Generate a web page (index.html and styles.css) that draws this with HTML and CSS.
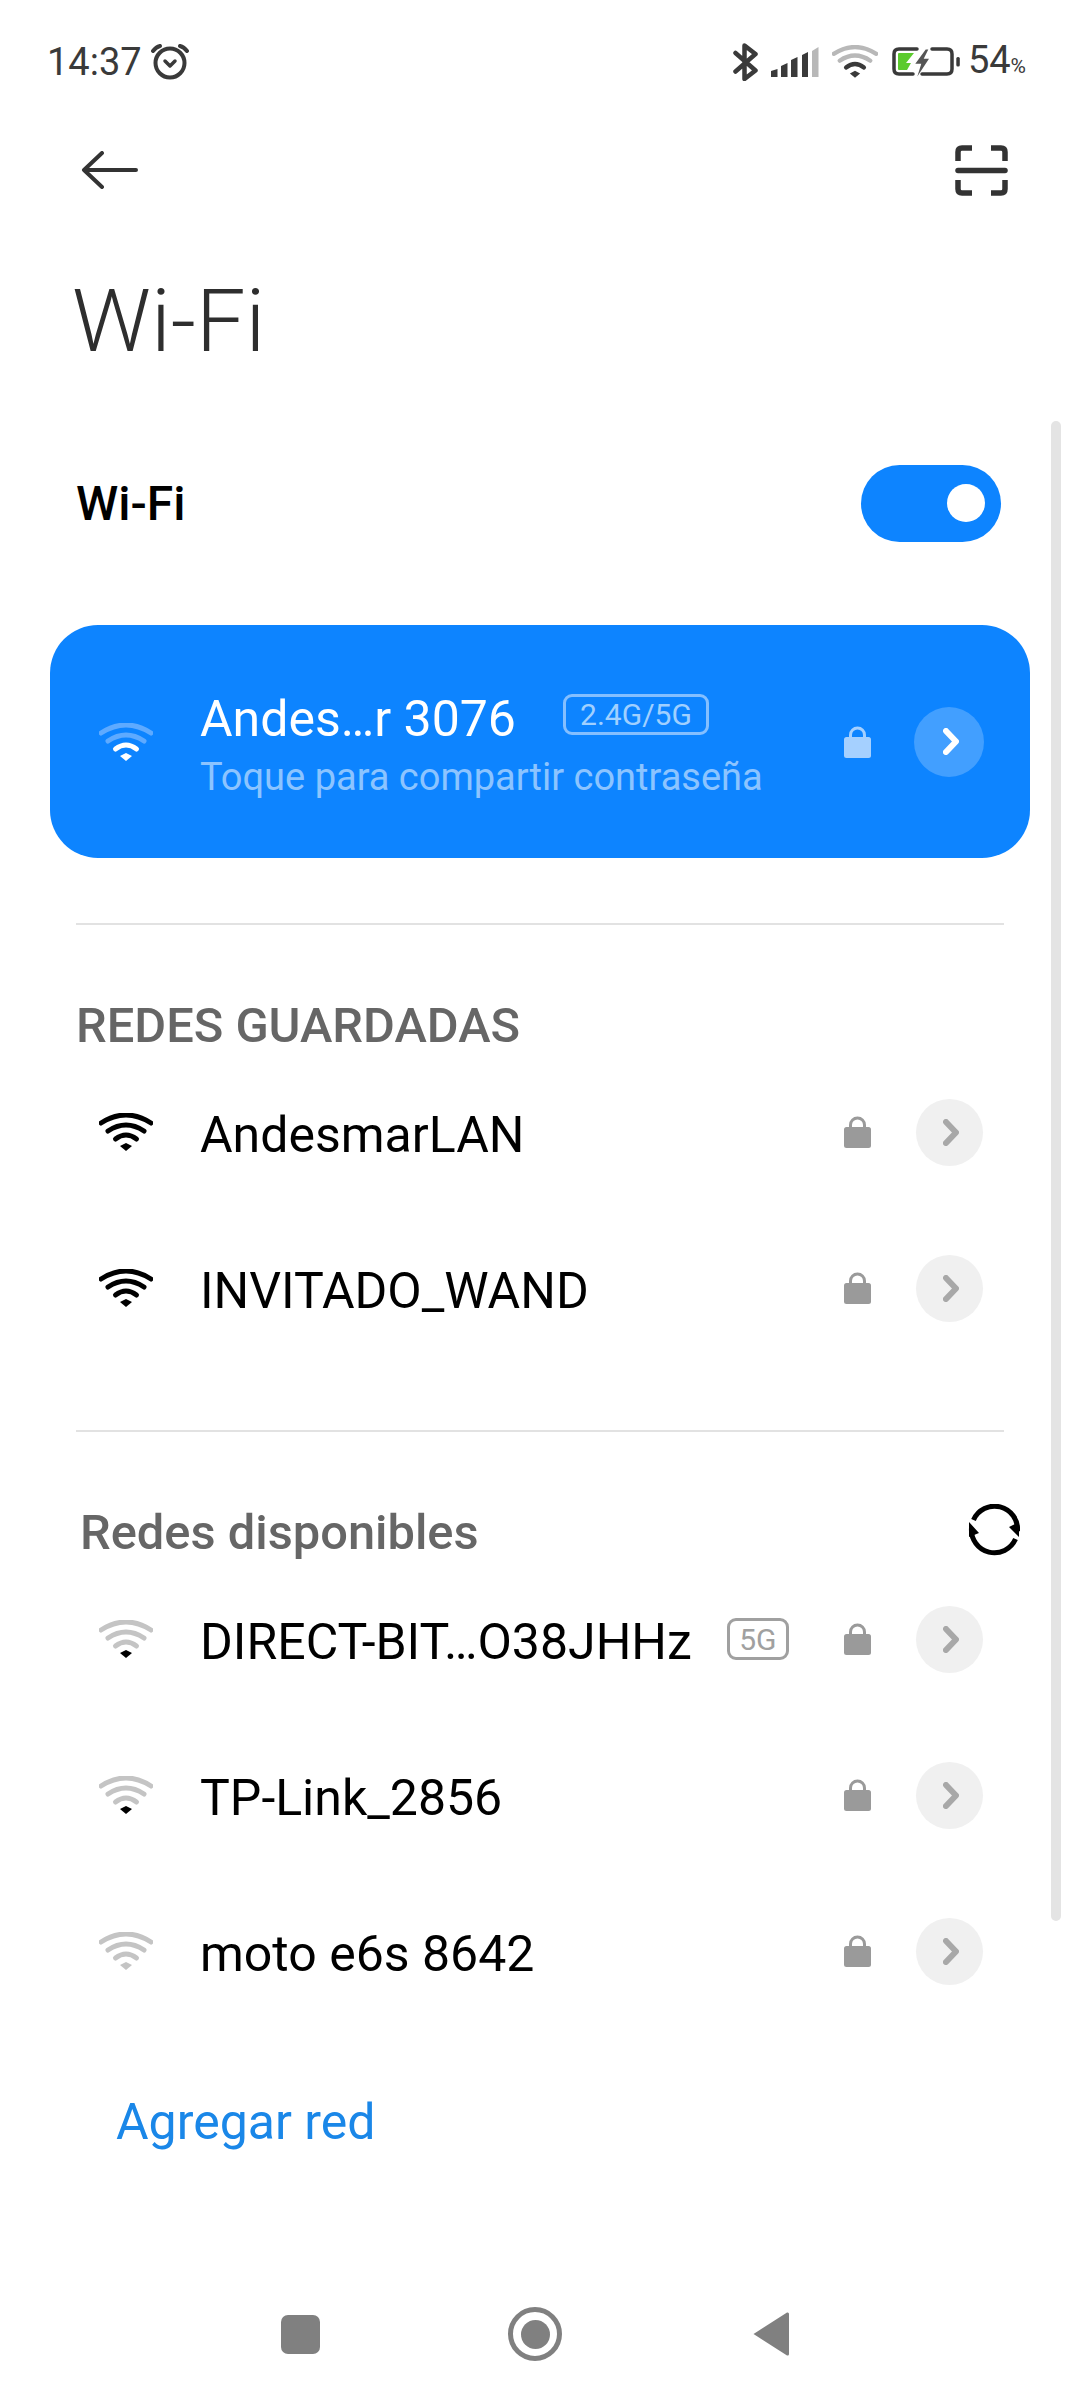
FILE: index.html
```html
<!DOCTYPE html>
<html lang="es">
<head>
<meta charset="utf-8">
<title>Wi-Fi</title>
<link rel="stylesheet" href="styles.css">
</head>
<body>
<div class="page">
  <div class="status">
    <div class="status-left">
      <span class="clock">14:37</span>
      <svg class="i-alarm" viewBox="0 0 40 36"><circle cx="20" cy="19" r="14.5"/><path d="M3 7 Q6 3 10 2 M37 7 Q34 3 30 2"/><path class="thin" d="M15 17 L20 22 L25 17"/></svg>
    </div>
    <div class="status-right">
      <svg class="i-bt" viewBox="0 0 25 38"><path d="M2.5 10 L22.5 27.5 L11.5 36 V2.5 L22.5 11 L2.5 28.5"/></svg>
      <svg class="i-signal" viewBox="0 0 48 30"><path d="M0 24 L6.500 22 V30 H0Z M10 19 L16.500 16 V30 H10Z M20 13 L26.500 10 V30 H20Z M31 8 L37 5 V30 H31Z"/><path class="dim" d="M41 4 L47.500 0 V30 H41Z"/></svg>
      <svg class="wifi i-swifi wifi-status" viewBox="0 0 54 38"><path class="a1" d="M2 10 Q27 -6 52 10"/><path class="a2" d="M9 18 Q27 6 45 18"/><path class="a3" d="M16.500 26 Q27 18 37.500 26"/><path class="d" d="M21 33 L27 30 L33 33 L27 38Z"/></svg>
      <svg class="i-batt" viewBox="0 0 70 32"><path class="line" d="M26 3 H8 Q3 3 3 8 V23 Q3 28 8 28 H22 M41 3 H56 Q61 3 61 8 V23 Q61 28 56 28 H31"/><path class="green" d="M8 7 H23 L15 17 H20 L16 24 H8 Q7 24 7 23 V8 Q7 7 8 7Z"/><path class="bolt" d="M34.700 3.500 L24.300 17.700 H30.300 L26.300 30.500 L38 12.700 H32.700 L37.300 3.500Z"/><rect class="cap" x="65.300" y="11" width="3.500" height="9.500" rx="1.500"/></svg>
      <span class="batt-num">54<small>%</small></span>
    </div>
  </div>

  <div class="toolbar">
    <svg class="i-back" viewBox="0 0 57 38"><path d="M55 19 H3 M21 2 L3 19 L21 36"/></svg>
    <svg class="i-scan" viewBox="0 0 53 51"><path d="M17 3 H7 Q3 3 3 7 V16 M36 3 H46 Q50 3 50 7 V16 M17 48 H7 Q3 48 3 44 V35 M36 48 H46 Q50 48 50 44 V35"/><path class="bar" d="M3 25.500 H50"/></svg>
  </div>

  <h1 class="title">Wi-Fi</h1>

  <div class="toggle-row">
    <span class="toggle-label">Wi-Fi</span>
    <div class="toggle"><span class="knob"></span></div>
  </div>

  <div class="card">
    <svg class="wifi wifi-card" viewBox="0 0 54 38"><path class="a1" d="M2 10 Q27 -6 52 10"/><path class="a2" d="M9 18 Q27 6 45 18"/><path class="a3" d="M16.500 26 Q27 18 37.500 26"/><path class="d" d="M21 33 L27 30 L33 33 L27 38Z"/></svg>
    <div class="card-text">
      <div class="card-top"><span class="card-name">Andes…r 3076</span><span class="tag tag-card">2.4G/5G</span></div>
      <div class="card-sub">Toque para compartir contraseña</div>
    </div>
    <svg class="lock lock-card" viewBox="0 0 27 32"><path class="shackle" d="M6.500 13 V9 a7 7 0 0 1 14 0 V13"/><rect y="11" width="27" height="21" rx="2.500"/></svg>
    <div class="go go-card"><svg viewBox="0 0 16 27"><path d="M3 3 L13 13.500 L3 24"/></svg></div>
  </div>

  <hr class="rule rule-first">

  <h2 class="heading heading-saved">REDES GUARDADAS</h2>

  <div class="net">
    <svg class="wifi wifi-full" viewBox="0 0 54 38"><path class="a1" d="M2 10 Q27 -6 52 10"/><path class="a2" d="M9 18 Q27 6 45 18"/><path class="a3" d="M16.500 26 Q27 18 37.500 26"/><path class="d" d="M21 33 L27 30 L33 33 L27 38Z"/></svg>
    <span class="net-name">AndesmarLAN</span>
    <svg class="lock" viewBox="0 0 27 32"><path class="shackle" d="M6.500 13 V9 a7 7 0 0 1 14 0 V13"/><rect y="11" width="27" height="21" rx="2.500"/></svg>
    <div class="go"><svg viewBox="0 0 16 27"><path d="M3 3 L13 13.500 L3 24"/></svg></div>
  </div>
  <div class="net">
    <svg class="wifi wifi-full" viewBox="0 0 54 38"><path class="a1" d="M2 10 Q27 -6 52 10"/><path class="a2" d="M9 18 Q27 6 45 18"/><path class="a3" d="M16.500 26 Q27 18 37.500 26"/><path class="d" d="M21 33 L27 30 L33 33 L27 38Z"/></svg>
    <span class="net-name">INVITADO_WAND</span>
    <svg class="lock" viewBox="0 0 27 32"><path class="shackle" d="M6.500 13 V9 a7 7 0 0 1 14 0 V13"/><rect y="11" width="27" height="21" rx="2.500"/></svg>
    <div class="go"><svg viewBox="0 0 16 27"><path d="M3 3 L13 13.500 L3 24"/></svg></div>
  </div>

  <hr class="rule rule-second">

  <div class="heading-row">
    <h2 class="heading heading-avail">Redes disponibles</h2>
    <svg class="i-refresh" viewBox="0 0 52 52"><path d="M5.500 16 A23 23 0 0 1 49.500 27 M47.500 35 A23 23 0 0 1 3.500 24"/><path class="head" d="M41 23 L51 18 L51 33Z M11 29 L1 33 L1 18Z"/></svg>
  </div>

  <div class="net">
    <svg class="wifi wifi-weak" viewBox="0 0 54 38"><path class="a1" d="M2 10 Q27 -6 52 10"/><path class="a2" d="M9 18 Q27 6 45 18"/><path class="a3" d="M16.500 26 Q27 18 37.500 26"/><path class="d" d="M21 33 L27 30 L33 33 L27 38Z"/></svg>
    <span class="net-name">DIRECT-BIT…O38JHHz</span>
    <span class="tag tag-net">5G</span>
    <svg class="lock" viewBox="0 0 27 32"><path class="shackle" d="M6.500 13 V9 a7 7 0 0 1 14 0 V13"/><rect y="11" width="27" height="21" rx="2.500"/></svg>
    <div class="go"><svg viewBox="0 0 16 27"><path d="M3 3 L13 13.500 L3 24"/></svg></div>
  </div>
  <div class="net">
    <svg class="wifi wifi-weak" viewBox="0 0 54 38"><path class="a1" d="M2 10 Q27 -6 52 10"/><path class="a2" d="M9 18 Q27 6 45 18"/><path class="a3" d="M16.500 26 Q27 18 37.500 26"/><path class="d" d="M21 33 L27 30 L33 33 L27 38Z"/></svg>
    <span class="net-name">TP-Link_2856</span>
    <svg class="lock" viewBox="0 0 27 32"><path class="shackle" d="M6.500 13 V9 a7 7 0 0 1 14 0 V13"/><rect y="11" width="27" height="21" rx="2.500"/></svg>
    <div class="go"><svg viewBox="0 0 16 27"><path d="M3 3 L13 13.500 L3 24"/></svg></div>
  </div>
  <div class="net">
    <svg class="wifi wifi-none" viewBox="0 0 54 38"><path class="a1" d="M2 10 Q27 -6 52 10"/><path class="a2" d="M9 18 Q27 6 45 18"/><path class="a3" d="M16.500 26 Q27 18 37.500 26"/><path class="d" d="M21 33 L27 30 L33 33 L27 38Z"/></svg>
    <span class="net-name">moto e6s 8642</span>
    <svg class="lock" viewBox="0 0 27 32"><path class="shackle" d="M6.500 13 V9 a7 7 0 0 1 14 0 V13"/><rect y="11" width="27" height="21" rx="2.500"/></svg>
    <div class="go"><svg viewBox="0 0 16 27"><path d="M3 3 L13 13.500 L3 24"/></svg></div>
  </div>

  <div class="add">Agregar red</div>

  <div class="nav">
    <span class="nav-cell"><span class="nav-square"></span></span>
    <span class="nav-cell"><span class="nav-home"></span></span>
    <span class="nav-cell"><svg class="nav-back" viewBox="0 0 37 46"><path d="M35 1.500 L1.500 23 L35 44.500 Q37 45 37 43 V3 Q37 1 35 1.500Z"/></svg></span>
  </div>

  <div class="scrollbar"></div>
</div>
</body>
</html>
```
FILE: styles.css
```css
* { box-sizing: border-box; }
html, body { margin: 0; padding: 0; background: #fff; }
body { font-family: Roboto, "Noto Sans", sans-serif; color: #000; }
.page { position: relative; width: 1080px; height: 2400px; overflow: hidden; display: flex; flex-direction: column; }

/* status bar */
.status { height: 120px; flex: none; display: flex; justify-content: space-between; align-items: center; padding: 3px 54px 0 47px; color: #3a3a3a; }
.status-left, .status-right { display: flex; align-items: center; }
.clock { font-size: 38px; line-height: 40px; }
.i-alarm { width: 40px; height: 36px; margin-left: 8px; fill: none; stroke: #3a3a3a; stroke-width: 4; stroke-linecap: round; stroke-linejoin: round; }
.i-alarm .thin { stroke-width: 3.500; }
.i-bt { width: 25px; height: 38px; fill: none; stroke: #3a3a3a; stroke-width: 4.500; stroke-linecap: round; stroke-linejoin: round; }
.i-signal { width: 48px; height: 30px; margin-left: 13px; margin-top: 1px; fill: #3a3a3a; }
.i-signal .dim { fill: #b8b8b8; }
.status .i-swifi { width: 46px; height: 33px; margin-left: 13px; }
.i-batt { width: 70px; height: 32px; margin-left: 13px; }
.i-batt .line { fill: none; stroke: #3a3a3a; stroke-width: 3.500; stroke-linecap: round; }
.i-batt .green { fill: #5ccb2e; }
.i-batt .bolt { fill: #555; }
.i-batt .cap { fill: #3a3a3a; }
.batt-num { font-size: 38px; line-height: 40px; margin-left: 7px; margin-top: 3px; }
.batt-num small { font-size: 21px; }

/* toolbar */
.toolbar { height: 100px; flex: none; display: flex; justify-content: space-between; align-items: center; padding: 0 72px 0 81px; }
.i-back { width: 57px; height: 38px; fill: none; stroke: #333; stroke-width: 4; stroke-linecap: round; stroke-linejoin: round; }
.i-scan { width: 53px; height: 51px; fill: none; stroke: #333; stroke-width: 5.500; stroke-linecap: butt; }
.i-scan .bar { stroke-linecap: round; }

.title { height: 206px; margin: 0; flex: none; padding: 46px 0 0 72px; font-size: 88px; line-height: 110px; font-weight: 300; color: #2e2e2e; }

/* master toggle */
.toggle-row { height: 154px; flex: none; display: flex; justify-content: space-between; align-items: center; padding: 0 79px 0 76px; }
.toggle-label { font-size: 48px; font-weight: 500; }
.toggle { width: 140px; height: 77px; border-radius: 39px; background: #0d84ff; display: flex; align-items: center; justify-content: flex-end; padding-right: 16px; }
.knob { width: 38px; height: 38px; border-radius: 50%; background: #fff; }

/* connected card */
.card { margin: 45px 50px 0; height: 233px; flex: none; border-radius: 48px; background: #0d84ff; display: flex; align-items: center; padding: 0 46px 0 49px; }
.card-text { margin-left: 47px; margin-top: 6px; flex: 1; min-width: 0; }
.card-top { display: flex; align-items: center; }
.card-name { font-size: 50px; line-height: 60px; color: #fff; }
.card-sub { font-size: 38px; line-height: 46px; color: #8cc4ff; margin-top: 5px; }
.tag { display: inline-flex; align-items: center; justify-content: center; border: 3px solid; border-radius: 9px; font-size: 30px; height: 41px; }
.tag-card { width: 146px; margin-left: 47px; margin-bottom: 9px; color: #a0d0ff; border-color: #84bfff; }
.tag-net { width: 62px; height: 42px; margin-left: 35px; color: #a0a0a0; border-color: #a0a0a0; }

.lock { width: 27px; height: 32px; flex: none; fill: #9a9a9a; margin-left: auto; }
.lock .shackle { fill: none; stroke: #9a9a9a; stroke-width: 3; }
.lock-card { fill: #a5d0ff; }
.lock-card .shackle { stroke: #a5d0ff; }
.go { width: 67px; height: 67px; flex: none; border-radius: 50%; background: #f0f0f0; margin-left: 45px; display: flex; align-items: center; justify-content: center; }
.go svg { width: 16px; height: 27px; margin-left: 3px; fill: none; stroke: #a8a8a8; stroke-width: 6; stroke-linecap: round; stroke-linejoin: round; }
.go-card { width: 70px; height: 70px; background: #429fff; margin-left: 43px; }
.go-card svg { stroke: #fff; }

.rule { border: 0; height: 2px; margin: 0 76px; background: #e2e2e2; flex: none; }
.rule-first { margin-top: 65px; }
.rule-second { margin-top: 64px; }

.heading { margin: 0; font-size: 48.800px; line-height: 60px; font-weight: 500; color: #666; }
.heading-saved { padding-left: 76px; margin-top: 71px; margin-bottom: -2px; flex: none; }
.heading-avail { margin-top: 3px; }
.heading-row { margin-top: 69px; height: 60px; flex: none; display: flex; justify-content: space-between; align-items: center; padding: 0 60px 0 80px; }
.i-refresh { width: 52px; height: 52px; margin-top: -3px; fill: none; stroke: #000; stroke-width: 5; }
.i-refresh .head { fill: #000; stroke: none; }

/* network rows */
.net { height: 156px; flex: none; display: flex; align-items: center; padding: 0 97px 0 99px; }
.net-name { margin-left: 47px; margin-top: 5px; font-size: 50px; line-height: 60px; }
.wifi { width: 54px; height: 38px; flex: none; fill: none; stroke-width: 5; stroke-linecap: round; }
.wifi .d { stroke: none; }
.wifi-full { stroke: #000; }
.wifi-full .d { fill: #000; }
.wifi-weak, .wifi-none { stroke: #c4c4c4; }
.wifi-weak .d { fill: #000; }
.wifi-none .d { fill: #c4c4c4; }
.wifi-card { stroke: #5eaaff; }
.wifi-card .a3 { stroke: #fff; }
.wifi-card .d { fill: #fff; }
.wifi-status { stroke: #b8b8b8; }
.wifi-status .a3 { stroke: #3a3a3a; }
.wifi-status .d { fill: #3a3a3a; }

.add { margin-top: 53px; padding-left: 116px; flex: none; font-size: 50px; line-height: 80px; color: #1a87e8; }

/* nav */
.nav { margin-top: auto; height: 132px; flex: none; display: grid; grid-template-columns: repeat(3, 235px); justify-content: center; align-items: center; padding-right: 10px; }
.nav-cell { display: flex; justify-content: center; align-items: center; }
.nav-square { width: 39px; height: 39px; border-radius: 7px; background: #808080; }
.nav-home { width: 54px; height: 54px; border-radius: 50%; border: 5px solid #808080; display: flex; align-items: center; justify-content: center; }
.nav-home::after { content: ""; width: 29px; height: 29px; border-radius: 50%; background: #808080; }
.nav-back { width: 37px; height: 46px; fill: #808080; }

.scrollbar { position: absolute; left: 1051px; top: 421px; width: 10px; height: 1500px; border-radius: 5px; background: #e4e4e4; }
```
